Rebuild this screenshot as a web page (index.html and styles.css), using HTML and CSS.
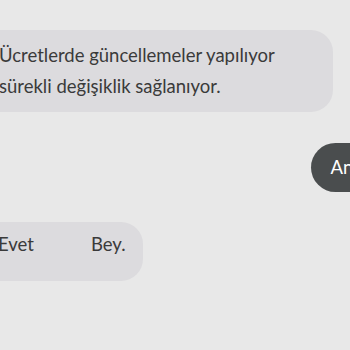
FILE: index.html
```html
<!DOCTYPE html>
<html>
<head>
  <meta charset="utf-8">
  <title>Sohbet</title>
  <link rel="stylesheet" href="styles.css">
</head>
<body>
<div class="chat">
  <div class="chat__row">
    <div class="chat__msg chat__msg_in chat__msg_wide">
      Ücretlerde güncellemeler yapılıyor<br>
      sürekli değişiklik sağlanıyor.
    </div>
  </div>
  <div class="chat__row chat__row_out">
    <div class="chat__msg chat__msg_out">Anladım</div>
  </div>
  <div class="chat__row">
    <div class="chat__msg chat__msg_in chat__msg_short">
      <span>Evet</span><span>Bey.</span>
    </div>
  </div>
</div>
</body>
</html>
```

FILE: styles.css
```css
html, body {
    margin: 0;
    padding: 0;
    background: #e8e8e8;
    overflow: hidden;
  }
.chat {
    width: 350px;
    height: 350px;
    padding-top: 30px;
    box-sizing: border-box;
    font-family: Lato, "Open Sans", sans-serif;
    font-size: 18.5px;
    color: #3a3a3a;
  }
.chat__row {
    display: flex;
  }
.chat__row_out {
    justify-content: flex-end;
    margin-top: 31px;
  }
.chat__msg {
    white-space: nowrap;
  }
.chat__msg_in {
    background: #dcdbde;
    border-radius: 22px;
    margin-left: -22px;
  }
.chat__msg_wide {
    width: 355px;
    box-sizing: border-box;
    padding: 10px 0 10px 21px;
    line-height: 31px;
  }
.chat__msg_out {
    background: #4a4d4e;
    color: #ffffff;
    border-radius: 25px;
    height: 49px;
    line-height: 49px;
    padding: 0 20px;
    margin-right: -67px;
  }
.chat__msg_short {
    margin-top: 30px;
    width: 165px;
    height: 59px;
    box-sizing: border-box;
    padding: 8px 0 0 20px;
    display: flex;
    gap: 57px;
    line-height: 28px;
  }
```
